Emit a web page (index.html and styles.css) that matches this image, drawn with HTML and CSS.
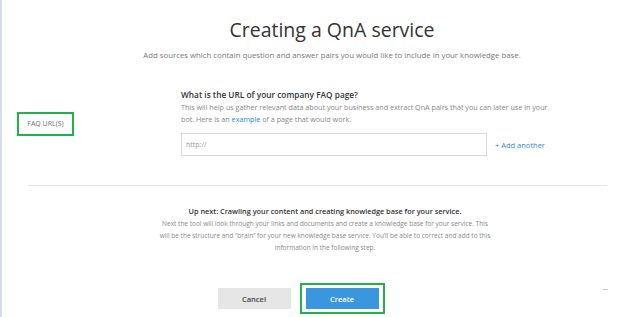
FILE: index.html
```html
<!DOCTYPE html>
<html lang="en">
  <head>
    <meta charset="UTF-8" />
    <meta name="viewport" content="width=device-width, initial-scale=1.0" />
    <title>Creating a QnA service</title>
    <link rel="stylesheet" href="styles.css">
  </head>
  <body>
    <div class="page">
      <header class="intro">
        <h1>Creating a QnA service</h1>
        <p class="lead">Add sources which contain question and answer pairs you would like to include in your knowledge base.</p>
      </header>

      <section class="form-row">
        <div class="label-cell">
          <span class="field-label">FAQ URL(S)</span>
        </div>
        <div class="field-cell">
          <h2>What is the URL of your company FAQ page?</h2>
          <p class="help">This will help us gather relevant data about your business and extract QnA pairs that you can later use in your bot. Here is an <a href="#">example</a> of a page that would work.</p>
          <div class="input-line">
            <input type="text" placeholder="http://" />
            <a href="#" class="add-link">+ Add another</a>
          </div>
        </div>
      </section>

      <hr class="divider" />

      <section class="next-up">
        <h3>Up next: Crawling your content and creating knowledge base for your service.</h3>
        <p>Next the tool will look through your links and documents and create a knowledge base for your service. This<br />will be the structure and “brain” for your new knowledge base service. You’ll be able to correct and add to this information in the following step.</p>
      </section>

      <div class="actions">
        <button class="btn btn-cancel">Cancel</button>
        <span class="highlight"><button class="btn btn-create">Create</button></span>
      </div>
      <span class="scroll-mark"></span>
    </div>
  </body>
</html>
```

FILE: styles.css
```css
body {
  margin: 0;
  font-family: "Open Sans", "Noto Sans", sans-serif;
  background: #fff;
  color: #333;
}

.page {
  position: relative;
  height: 317px;
  border-left: 2px solid #d6dce9;
  box-sizing: border-box;
  overflow: hidden;
}

.intro {
  text-align: center;
  padding: 15px 0 0 38px;
}

.intro h1 {
  margin: 0;
  font-size: 19.5px;
  font-weight: 400;
  line-height: 30px;
  color: #333;
}

.intro .lead {
  margin: 5px 0 0;
  font-size: 7.8px;
  line-height: 11px;
  color: #777;
}

.form-row {
  display: grid;
  grid-template-columns: 179px 1fr;
  margin-top: 28px;
}

.label-cell {
  display: flex;
  align-items: center;
  padding-left: 15px;
  padding-top: 2px;
}

.field-label {
  display: inline-block;
  width: 53px;
  height: 20px;
  line-height: 20px;
  border: 2px solid #22b14c;
  font-size: 7px;
  color: #6e6e6e;
  text-align: center;
}

.field-cell h2 {
  margin: 0;
  font-size: 8.3px;
  font-weight: 600;
  line-height: 12px;
  color: #333;
}

.help {
  margin: 0;
  width: 372px;
  font-size: 7.2px;
  line-height: 12px;
  color: #888;
}

.help a {
  color: #2b88d8;
  text-decoration: none;
}

.input-line {
  display: flex;
  align-items: center;
  gap: 8px;
  margin-top: 8px;
}

.input-line input {
  flex: none;
  width: 306px;
  height: 23px;
  box-sizing: border-box;
  border: 1px solid #d9d9d9;
  padding: 0 4px;
  font-family: inherit;
  font-size: 7px;
}

.input-line input::placeholder {
  color: #999;
}

.add-link {
  font-size: 7.5px;
  color: #2b88d8;
  text-decoration: none;
}

.divider {
  margin: 29px 17px 0 26px;
  border: 0;
  border-top: 1px solid #e6e6e6;
}

.next-up {
  text-align: center;
  padding-left: 24px;
  margin-top: 19px;
}

.next-up h3 {
  margin: 0;
  font-size: 7.3px;
  font-weight: 600;
  line-height: 12px;
  color: #333;
}

.next-up p {
  margin: 1px auto 0;
  width: 362px;
  font-size: 6.5px;
  line-height: 12px;
  color: #888;
}

.actions {
  display: flex;
  justify-content: center;
  align-items: center;
  gap: 9px;
  margin-top: 29px;
  padding-right: 24px;
}

.btn {
  width: 73px;
  height: 21px;
  border: none;
  font-family: inherit;
  font-size: 7.5px;
  font-weight: 600;
  cursor: pointer;
}

.btn-cancel {
  background: #e6e6e6;
  color: #444;
}

.highlight {
  display: inline-block;
  padding: 3px 4px;
  border: 2px solid #22b14c;
  line-height: 0;
}

.btn-create {
  background: #3a96dd;
  color: #fff;
}

.scroll-mark {
  position: absolute;
  left: 601px;
  top: 289px;
  width: 5px;
  height: 1px;
  background: #ccc;
}
```
